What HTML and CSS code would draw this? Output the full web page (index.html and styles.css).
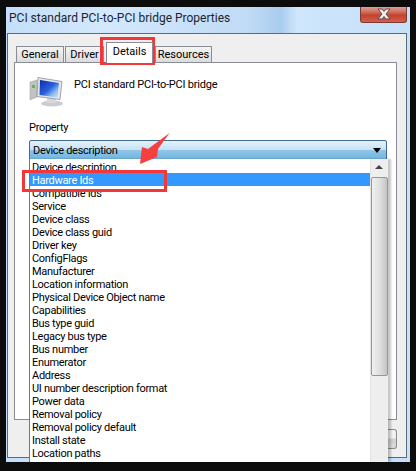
FILE: index.html
```html
<!DOCTYPE html>
<html lang="en">
<head>
  <meta charset="UTF-8">
  <title>PCI standard PCI-to-PCI bridge Properties</title>
  <link rel="stylesheet" href="styles.css">
</head>
<body>

  <div class="window">
    <!-- title bar -->
    <div class="titlebar">
      <span class="title">PCI standard PCI-to-PCI bridge Properties</span>
      <div class="close">
        <svg width="16" height="12" viewBox="0 0 16 12">
          <path d="M2 1h4l2 2.500 2-2.500h4l-4 5 4 5h-4l-2-2.500-2 2.500h-4l4-5z" fill="#f2f2f2" stroke="#5d4a52" stroke-width="1"/>
        </svg>
      </div>
    </div>

    <div class="panel">
      <div class="tabs">
        <div class="tab tab-general">General</div>
        <div class="tab tab-driver">Driver</div>
        <div class="tab tab-active">Details</div>
        <div class="tab tab-resources">Resources</div>
      </div>

      <div class="page">
        <div class="device">
          <svg class="device-icon" width="34" height="30" viewBox="0 0 34 30">
            <defs>
              <linearGradient id="screen" x1="0" y1="0" x2="1" y2="1">
                <stop offset="0" stop-color="#0a2aa8"/>
                <stop offset="0.5" stop-color="#2a62dc"/>
                <stop offset="0.75" stop-color="#8fbdf0"/>
                <stop offset="1" stop-color="#d3e6f8"/>
              </linearGradient>
            </defs>
            <ellipse cx="23" cy="26.500" rx="11" ry="3" fill="#c9ccd0"/>
            <path d="M18 20h9v6h-9z" fill="#d6d8da"/>
            <path d="M1 5l7-2v17l-7 3z" fill="#bfc4bf" stroke="#9a9f9a" stroke-width="0.500"/>
            <rect x="3" y="8" width="3" height="3" fill="#6fae5a"/>
            <path d="M9 0.500l24 4-2 18-23-3z" fill="#e4e7ea" stroke="#8b9096" stroke-width="0.800"/>
            <path d="M11 3l19 3-1.500 14.500-18-2.500z" fill="url(#screen)"/>
          </svg>
          <span class="device-name">PCI standard PCI-to-PCI bridge</span>
        </div>
        <div class="property-label">Property</div>
        <div class="combo">
          <span>Device description</span>
          <div class="combo-arrow"></div>
        </div>
      </div>

      <div class="btn-row">
        <div class="btn"></div>
      </div>
    </div>
  </div>

  <!-- open dropdown list, hangs over the dialog -->
  <div class="dropdown">
    <ul class="items">
      <li>Device description</li>
      <li class="selected">Hardware Ids</li>
      <li>Compatible Ids</li>
      <li>Service</li>
      <li>Device class</li>
      <li>Device class guid</li>
      <li>Driver key</li>
      <li>ConfigFlags</li>
      <li>Manufacturer</li>
      <li>Location information</li>
      <li>Physical Device Object name</li>
      <li>Capabilities</li>
      <li>Bus type guid</li>
      <li>Legacy bus type</li>
      <li>Bus number</li>
      <li>Enumerator</li>
      <li>Address</li>
      <li>UI number description format</li>
      <li>Power data</li>
      <li>Removal policy</li>
      <li>Removal policy default</li>
      <li>Install state</li>
      <li>Location paths</li>
      <li>Base Container Id</li>
    </ul>
    <div class="scrollbar">
      <div class="scroll-up"></div>
      <div class="scroll-thumb"></div>
    </div>
  </div>

  <!-- red annotations -->
  <div class="mark mark-tab"></div>
  <div class="mark mark-item"></div>
  <svg class="arrow" width="40" height="40" viewBox="0 0 40 40">
    <path d="M31.500 3L20 19l-1 8-17 7 2-17 6 2z" fill="#f5403e"/>
  </svg>

</body>
</html>
```

FILE: styles.css
```css
html, body {
  margin: 0;
  height: 100%;
  overflow: hidden;
}

body {
  background-color: #0c0c0c;
  font-family: Roboto, "Liberation Sans", sans-serif;
  font-size: 11px;
  letter-spacing: -0.3px;
  color: #000;
  position: relative;
  padding: 7px 6px 9px;
  box-sizing: border-box;
}

/* glass frame */
.window {
  height: 455px;
  padding: 0 3px 4px 1px;
  box-sizing: border-box;
  display: flex;
  flex-direction: column;
  background: linear-gradient(90deg, #c4dffa 0%, #d3e8fc 25%, #c0dbf6 60%, #a9cdee 68%, #cfe6fc 72%, #c5e0fb 100%);
}

.titlebar {
  height: 26px;
  flex: none;
  display: flex;
  justify-content: space-between;
  padding-left: 2px;
}

.title {
  font-size: 12px;
  line-height: 22px;
  letter-spacing: 0;
  color: #1a2530;
}

.close {
  width: 47px;
  height: 16px;
  box-sizing: border-box;
  border: 1px solid #7b3a33;
  border-top: none;
  border-radius: 0 0 3px 3px;
  background: linear-gradient(#d8a094 0%, #cf7565 30%, #c6412f 55%, #d0604d 100%);
  display: flex;
  justify-content: center;
  align-items: flex-start;
  padding-top: 1px;
}

.panel {
  flex: 1;
  display: flex;
  flex-direction: column;
  border: 1px solid #5f6a74;
  background-color: #efefef;
  padding: 6px 9px 0 6px;
  min-height: 0;
}

.tabs {
  display: flex;
  align-items: flex-end;
  height: 22px;
  padding-left: 2px;
  flex: none;
  letter-spacing: 0;
}

.tab {
  height: 16px;
  line-height: 15px;
  box-sizing: border-box;
  border: 1px solid #898c95;
  border-bottom: none;
  background: linear-gradient(#f4f4f4, #dcdcdc);
  text-align: center;
  margin-right: 1px;
}

.tab-general { width: 48px; }
.tab-driver { width: 39px; }
.tab-resources { width: 57px; }

.tab-active {
  width: 47px;
  height: 21px;
  line-height: 18px;
  background: #fff;
  position: relative;
  z-index: 1;
  margin-bottom: -1px;
  margin-right: 2px;
  margin-left: 1px;
}

.page {
  height: 358px;
  flex: none;
  box-sizing: border-box;
  border: 1px solid #898c95;
  background-color: #fff;
  padding: 14px 9px 0 14px;
}

.device {
  display: flex;
  align-items: flex-start;
  gap: 11px;
  height: 30px;
}

.device-name {
  line-height: 16px;
  letter-spacing: -0.2px;
}

.property-label {
  margin-top: 13px;
  line-height: 15px;
}

.combo {
  margin-top: 5px;
  height: 21px;
  box-sizing: border-box;
  border: 1px solid #3f6a8c;
  border-radius: 2px;
  background: linear-gradient(#e4f2fc 0%, #c6e2f6 45%, #8fc6e8 50%, #6fb2dc 100%);
  display: flex;
  justify-content: space-between;
  align-items: center;
  padding: 0 5px 1px 3px;
}

.combo-arrow {
  width: 0;
  height: 0;
  border-left: 4px solid transparent;
  border-right: 4px solid transparent;
  border-top: 5px solid #000;
}

.btn-row {
  display: flex;
  justify-content: flex-end;
  padding-top: 9px;
}

.btn {
  width: 12px;
  height: 20px;
  box-sizing: border-box;
  border: 1px solid #8a8a8a;
  border-left: none;
  border-radius: 0 3px 3px 0;
  background: linear-gradient(#f2f2f2 45%, #d0d0d0 50%, #dcdcdc);
}

/* list over the dialog */
.dropdown {
  position: absolute;
  left: 29px;
  top: 159px;
  width: 359px;
  height: 303px;
  box-sizing: border-box;
  display: flex;
  background-color: #fff;
  border-left: 1px solid #777;
  box-shadow: 3px 0 2px rgba(0, 0, 0, 0.22);
  overflow: hidden;
}

.items {
  list-style: none;
  margin: 0;
  padding: 1px 0 0;
  flex: 1;
}

.items li {
  height: 13px;
  box-sizing: border-box;
  padding: 2px 0 0 2px;
  line-height: 11px;
  white-space: nowrap;
}

.items .selected {
  background-color: #3399ff;
  color: #fff;
}

.scrollbar {
  width: 17px;
  flex: none;
  background-color: #eeeeee;
  border-left: 1px solid #e3e3e3;
}

.scroll-up {
  height: 18px;
  position: relative;
}

.scroll-up::after {
  content: "";
  position: absolute;
  left: 4px;
  top: 6px;
  border-left: 4px solid transparent;
  border-right: 4px solid transparent;
  border-bottom: 4px solid #444;
}

.scroll-thumb {
  height: 199px;
  box-sizing: border-box;
  border: 1px solid #979797;
  border-radius: 2px;
  background: linear-gradient(90deg, #f0f0f0, #dedede 55%, #c4c4c4);
}

.mark {
  position: absolute;
  box-sizing: border-box;
  border: 3px solid #f1373a;
}

.mark-tab {
  left: 100px;
  top: 37px;
  width: 55px;
  height: 28px;
}

.mark-item {
  left: 22px;
  top: 170px;
  width: 145px;
  height: 22px;
}

.arrow {
  position: absolute;
  left: 138px;
  top: 130px;
}
```
